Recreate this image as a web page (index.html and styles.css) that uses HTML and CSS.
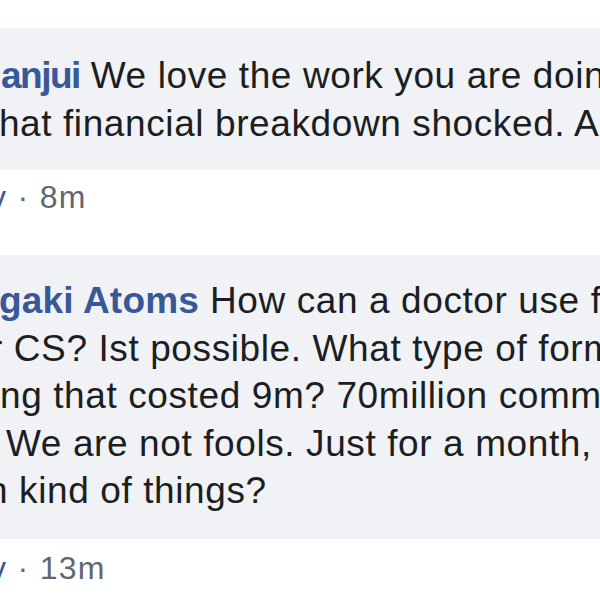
FILE: index.html
```html
<!DOCTYPE html>
<html>
<head>
<meta charset="utf-8">
<link rel="stylesheet" href="styles.css">
</head>
<body>
<div class="thread">
  <div class="comment c1">
    <div class="bubble b1">
      <span class="line l1a"><span class="name n1">anjui</span> We love the work you are doing</span>
      <span class="line l1b">that financial breakdown shocked. Actually</span>
    </div>
    <div class="meta m1"><span class="link">y</span> · 8m</div>
  </div>
  <div class="comment c2">
    <div class="bubble b2">
      <span class="line l2a"><span class="name">gaki Atoms</span> How can a doctor use for</span>
      <span class="line l2b">r CS? Ist possible. What type of form</span>
      <span class="line l2c">ng that costed 9m? 70million commission</span>
      <span class="line l2d">We are not fools. Just for a month,</span>
      <span class="line l2e">n kind of things?</span>
    </div>
    <div class="meta m2"><span class="link">y</span> · 13m</div>
  </div>
</div>
</body>
</html>
```

FILE: styles.css
```css
html, body {
  margin: 0;
  padding: 0;
  background: #ffffff;
}
body {
  width: 600px;
  height: 600px;
  overflow: hidden;
  font-family: "Liberation Sans", Arial, sans-serif;
}
.thread {
  display: flex;
  flex-direction: column;
}
.comment {
  display: flex;
  flex-direction: column;
}
.c1 {
  padding-top: 28px;
}
.c2 {
  padding-top: 38px;
}
.bubble {
  background: #f0f2f5;
  color: #1c1e21;
  font-size: 37px;
  letter-spacing: 0.6px;
  line-height: 47.5px;
  overflow: hidden;
  display: flex;
  flex-direction: column;
}
.b1 {
  padding: 24px 0 23px 0;
}
.b2 {
  padding: 22px 0 24px 0;
}
.line {
  display: block;
  white-space: nowrap;
}
.name {
  color: #385898;
  font-weight: bold;
  letter-spacing: 0.2px;
}
.n1 {
  letter-spacing: -1.5px;
}
.l1a { margin-left: 1px; }
.l1b { margin-left: -12px; }
.l2a { margin-left: -1px; }
.l2b { margin-left: -10px; }
.l2c { margin-left: 0px; }
.l2d { margin-left: 6px; }
.l2e { margin-left: -13px; }
.meta {
  color: #606770;
  font-size: 32px;
  letter-spacing: 1.3px;
  line-height: 40px;
  white-space: nowrap;
  overflow: hidden;
  margin-left: -10px;
}
.m1 { padding-top: 7px; }
.m2 { padding-top: 9px; }
.link {
  color: #385898;
}
```
